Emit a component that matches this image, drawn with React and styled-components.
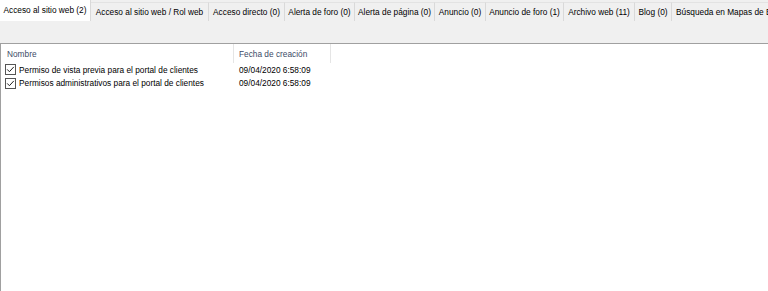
import React from "react";
import styled, { createGlobalStyle } from "styled-components";

const Global = createGlobalStyle`
  html, body { margin: 0; padding: 0; background: #fff; }
  body { font-family: "Liberation Sans", Arial, sans-serif; }
`;

const Window = styled.div`
  width: 768px;
  height: 291px;
  display: flex;
  flex-direction: column;
  background: #f0f0f0;
  overflow: hidden;
  font-family: "Liberation Sans", Arial, sans-serif;
  font-size: 8.3px;
  color: #000;
`;

const TabStrip = styled.div`
  display: flex;
  align-items: flex-end;
  height: 21px;
  flex: none;
  white-space: nowrap;
`;

const Tab = styled.div`
  flex: none;
  box-sizing: border-box;
  width: ${(p) => p.$w}px;
  height: ${(p) => (p.$active ? 21 : 19)}px;
  display: flex;
  align-items: center;
  justify-content: ${(p) => (p.$start ? "flex-start" : "center")};
  padding-left: ${(p) => (p.$start ? 4 : 0)}px;
  padding-bottom: ${(p) => (p.$active ? 1 : 0)}px;
  background: ${(p) => (p.$active ? "#ffffff" : "#f0f0f0")};
  border-right: 1px solid #d9d9d9;
  border-top: ${(p) => (p.$active ? "none" : "1px solid #e3e3e3")};
  overflow: hidden;
`;

const Toolbar = styled.div`
  height: 22px;
  flex: none;
  background: #f0f0f0;
`;

const ListView = styled.div`
  flex: 1;
  background: #fff;
  border-top: 1px solid #a0a0a0;
  border-left: 1px solid #a0a0a0;
  display: flex;
  flex-direction: column;
`;

const HeaderRow = styled.div`
  display: flex;
  height: 19px;
  flex: none;
`;

const HeaderCell = styled.div`
  box-sizing: border-box;
  width: ${(p) => p.$w}px;
  padding-left: ${(p) => p.$pad}px;
  display: flex;
  align-items: center;
  border-right: 1px solid #e5e5e5;
  color: #3c4a66;
`;

const Rows = styled.div`
  display: flex;
  flex-direction: column;
`;

const Row = styled.div`
  display: flex;
  height: 13.5px;
  align-items: center;
`;

const NameCell = styled.div`
  box-sizing: border-box;
  width: 233px;
  padding-left: 4px;
  display: flex;
  align-items: center;
  gap: 3px;
`;

const DateCell = styled.div`
  padding-left: 5px;
`;

const Check = () => (
  <svg width="11" height="11" viewBox="0 0 11 11">
    <rect x="0.5" y="0.5" width="10" height="10" fill="#fff" stroke="#555" />
    <path d="M2.2 5.4 L4.4 7.7 L8.8 2.9" fill="none" stroke="#222" strokeWidth="1" />
  </svg>
);

const tabs = [
  ["Acceso al sitio web (2)", 91],
  ["Acceso al sitio web / Rol web", 118],
  ["Acceso directo (0)", 76],
  ["Alerta de foro (0)", 70],
  ["Alerta de página (0)", 80],
  ["Anuncio (0)", 51],
  ["Anuncio de foro (1)", 78],
  ["Archivo web (11)", 71],
  ["Blog (0)", 37],
  ["Búsqueda en Mapas de Bing (0)", 125],
];

const rows = [
  ["Permiso de vista previa para el portal de clientes", "09/04/2020 6:58:09"],
  ["Permisos administrativos para el portal de clientes", "09/04/2020 6:58:09"],
];

export default function App() {
  return (
    <>
      <Global />
      <Window>
        <TabStrip>
          {tabs.map(([label, w], i) => (
            <Tab key={label} $w={w} $active={i === 0} $start={i === tabs.length - 1}>
              {label}
            </Tab>
          ))}
        </TabStrip>
        <Toolbar />
        <ListView>
          <HeaderRow>
            <HeaderCell $w={233} $pad={6}>Nombre</HeaderCell>
            <HeaderCell $w={97} $pad={5}>Fecha de creación</HeaderCell>
          </HeaderRow>
          <Rows>
            {rows.map(([name, date]) => (
              <Row key={name}>
                <NameCell>
                  <Check />
                  <span>{name}</span>
                </NameCell>
                <DateCell>{date}</DateCell>
              </Row>
            ))}
          </Rows>
        </ListView>
      </Window>
    </>
  );
}
